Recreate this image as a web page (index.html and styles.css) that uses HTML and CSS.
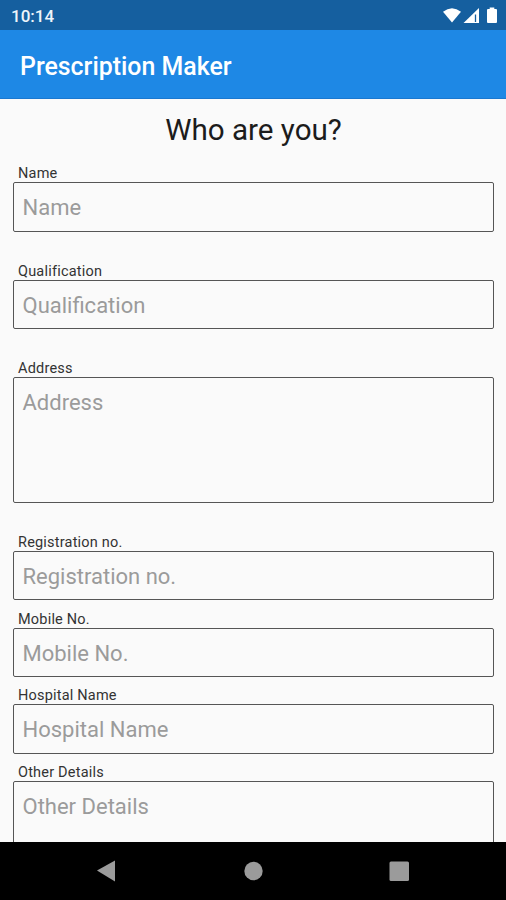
FILE: index.html
```html
<!DOCTYPE html>
<html lang="en">
<head>
<meta charset="utf-8">
<title>Prescription Maker</title>
<link rel="stylesheet" href="styles.css">
</head>
<body>
<div class="screen">
  <div class="status">
    <span>10:14</span>
    <svg class="status-icons" width="58" height="22" viewBox="0 0 58 22">
      <path d="M0 3.8Q9 -3.4 18 3.8L9 14.5Z" fill="#fff"/>
      <path d="M20.5 15L36 0V15Z" fill="#fff"/>
      <path d="M32.5 6.5V14" stroke="#155f9f" stroke-width="1.3"/>
      <path d="M45 1H46.7V-.5H51.3V1H53Q54 1 54 2V14Q54 15 53 15H45Q44 15 44 14V2Q44 1 45 1Z" fill="#fff"/>
    </svg>
  </div>
  <header class="appbar">Prescription Maker</header>
  <main class="form">
    <h1>Who are you?</h1>
    <div class="field spaced"><div class="label">Name</div><div class="box">Name</div></div>
    <div class="field spaced"><div class="label">Qualification</div><div class="box">Qualification</div></div>
    <div class="field large"><div class="label">Address</div><div class="box">Address</div></div>
    <div class="field"><div class="label">Registration no.</div><div class="box">Registration no.</div></div>
    <div class="field"><div class="label">Mobile No.</div><div class="box">Mobile No.</div></div>
    <div class="field"><div class="label">Hospital Name</div><div class="box">Hospital Name</div></div>
    <div class="field large"><div class="label">Other Details</div><div class="box">Other Details</div></div>
  </main>
  <nav class="navbar">
    <svg width="506" height="58" viewBox="0 0 506 58">
      <path d="M97 28.5L115 18.5V39.5Z" fill="#9b9b9b"/>
      <circle cx="253.5" cy="29" r="9.2" fill="#9b9b9b"/>
      <rect x="389.5" y="19.5" width="19.5" height="19.5" rx="1.5" fill="#9b9b9b"/>
    </svg>
  </nav>
</div>
</body>
</html>
```
FILE: styles.css
```css
body {
  margin: 0;
  font-family: Roboto, sans-serif;
  background: #fafafa;
}
.screen {
  display: flex;
  flex-direction: column;
  width: 506px;
  height: 900px;
  overflow: hidden;
}
.status {
  flex: none;
  display: flex;
  justify-content: space-between;
  height: 30px;
  padding: 0 5px 0 11px;
  box-sizing: border-box;
  background: #155f9f;
  color: #eef5fb;
  font-size: 17px;
  font-weight: 500;
  line-height: 32px;
}
.status-icons {
  margin-top: 8px;
  overflow: visible;
}
.appbar {
  flex: none;
  height: 69px;
  padding-left: 20px;
  box-sizing: border-box;
  border-bottom: 1px solid #1a78d0;
  background: #1e88e5;
  color: #fff;
  font-size: 24.9px;
  font-weight: 500;
  line-height: 73px;
}
.form {
  flex: 1;
  min-height: 0;
  overflow: hidden;
  padding: 0 12px 0 13px;
}
h1 {
  margin: 0;
  height: 65.4px;
  color: #1c1c1c;
  font-size: 29.6px;
  font-weight: 400;
  line-height: 63px;
  text-align: center;
}
.field {
  height: 76.8px;
}
.spaced {
  height: 97.2px;
}
.large {
  height: 174px;
}
.label {
  height: 18px;
  padding-left: 5px;
  color: #333;
  font-size: 14.5px;
  letter-spacing: 0.2px;
  line-height: 19px;
}
.box {
  height: 49.3px;
  padding-left: 8.5px;
  box-sizing: border-box;
  border: 1px solid #555;
  border-radius: 2px;
  color: #9b9b9b;
  font-size: 22px;
  line-height: 50.6px;
}
.large .box {
  height: 126px;
}
.navbar {
  flex: none;
  height: 58px;
  background: #000;
}
.navbar svg {
  display: block;
}
```
